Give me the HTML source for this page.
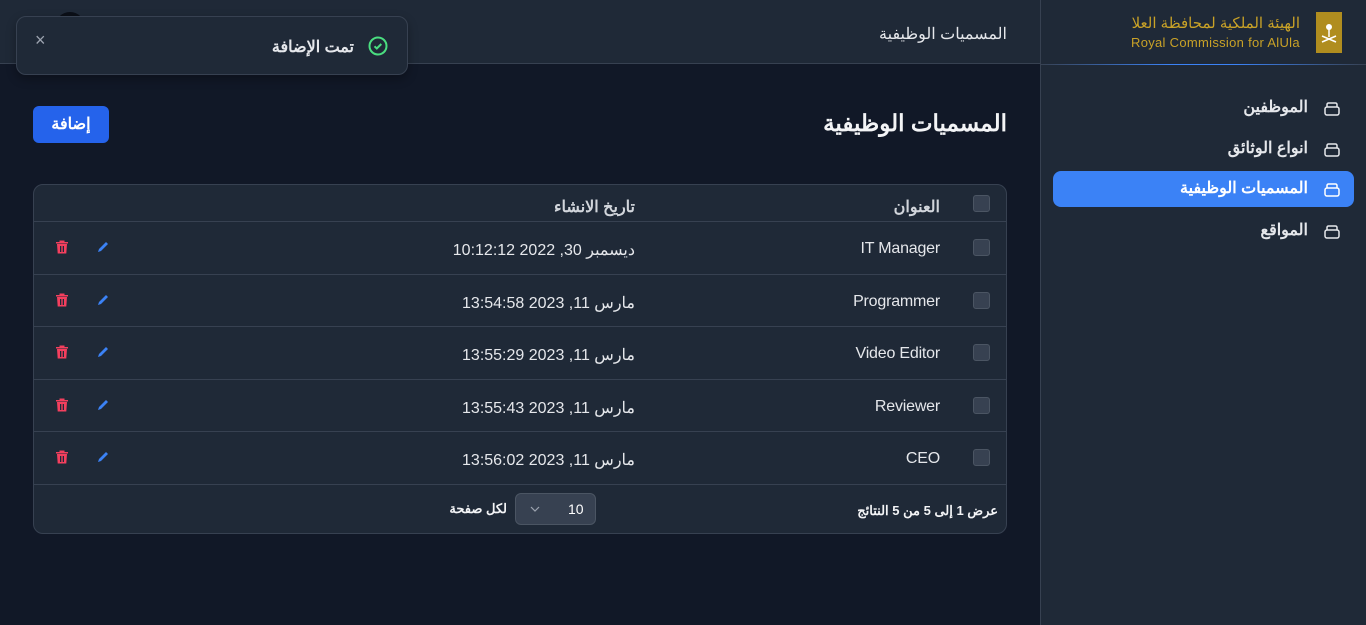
<!DOCTYPE html>
<html><head><meta charset="utf-8"><style>
*{box-sizing:border-box;margin:0;padding:0}
body{width:1366px;height:625px;background:#111827;font-family:"Liberation Sans","Noto Sans CJK SC",sans-serif;color:#e5e7eb;position:relative;overflow:hidden}
.abs{position:absolute}
.hdr{left:0;top:0;width:1040px;height:64px;background:#1f2937;border-bottom:1px solid #374151}
.side{left:1040px;top:0;width:326px;height:625px;background:#1f2937;border-left:1px solid #374151}
.rt{direction:rtl;text-align:right;white-space:nowrap}
.nav{left:1053px;width:301px;height:36px;border-radius:8px;font-size:16px;font-weight:bold;color:#e5e7eb;line-height:36px}
.nav span{position:absolute;right:46px}
.nav svg{position:absolute;right:14px;top:10px}
.tbl{left:33px;top:184px;width:974px;height:350px;background:#1f2937;border:1px solid #374151;border-radius:10px;overflow:hidden}
.row{position:absolute;left:0;width:972px;border-top:1px solid #374151}
.cb{position:absolute;left:939px;width:17px;height:17px;background:#374151;border:1px solid #4b5563;border-radius:3px}
.t1{position:absolute;right:66px;font-size:16px;letter-spacing:-0.2px}
.t2{position:absolute;right:371px;font-size:16px;letter-spacing:-0.3px}
</style></head><body>
<div class="abs hdr"></div>
<div class="abs" style="left:55px;top:12px;width:30px;height:30px;border-radius:50%;background:#0b0f17"></div>
<div class="abs rt" style="right:359px;top:24px;font-size:16px;color:#e5e7eb">المسميات الوظيفية</div>
<div class="abs side"></div>
<div class="abs" style="left:1040px;top:64px;width:326px;height:1px;background:linear-gradient(90deg,#374151,#3b82f6 40%,#3b82f6 60%,#374151)"></div>
<div class="abs" style="left:1316px;top:12px;width:26px;height:41px;background:#b08d1f"><svg width="26" height="41" viewBox="0 0 26 41"><circle cx="13" cy="15" r="3" fill="#fff"/><path d="M13 17v8M6 24l14 6M20 24l-14 6" stroke="#fff" stroke-width="1.5"/></svg></div>
<div class="abs rt" style="right:66px;top:14px;font-size:15px;color:#c9a227">الهيئة الملكية لمحافظة العلا</div>
<div class="abs" style="left:1131px;top:35px;font-size:13px;color:#c9a227;white-space:nowrap;letter-spacing:0.3px">Royal Commission for AlUla</div>
<div class="abs nav" style="top:90px"><span>الموظفين</span><svg width="16" height="16" viewBox="0 0 16 16" fill="none" stroke="#e5e7eb" stroke-width="1.5"><rect x="1" y="7" width="14" height="8" rx="2"/><path d="M3 7V4.5A1.5 1.5 0 0 1 4.5 3h7A1.5 1.5 0 0 1 13 4.5V7"/></svg></div>
<div class="abs nav" style="top:131px"><span>انواع الوثائق</span><svg width="16" height="16" viewBox="0 0 16 16" fill="none" stroke="#e5e7eb" stroke-width="1.5"><rect x="1" y="7" width="14" height="8" rx="2"/><path d="M3 7V4.5A1.5 1.5 0 0 1 4.5 3h7A1.5 1.5 0 0 1 13 4.5V7"/></svg></div>
<div class="abs nav" style="top:171px;background:#3b82f6;color:#fff"><span>المسميات الوظيفية</span><svg width="16" height="16" viewBox="0 0 16 16" fill="none" stroke="#fff" stroke-width="1.5"><rect x="1" y="7" width="14" height="8" rx="2"/><path d="M3 7V4.5A1.5 1.5 0 0 1 4.5 3h7A1.5 1.5 0 0 1 13 4.5V7"/></svg></div>
<div class="abs nav" style="top:213px"><span>المواقع</span><svg width="16" height="16" viewBox="0 0 16 16" fill="none" stroke="#e5e7eb" stroke-width="1.5"><rect x="1" y="7" width="14" height="8" rx="2"/><path d="M3 7V4.5A1.5 1.5 0 0 1 4.5 3h7A1.5 1.5 0 0 1 13 4.5V7"/></svg></div>

<div class="abs" style="left:16px;top:16px;width:392px;height:59px;background:#1f2937;border:1px solid #374151;border-radius:10px;box-shadow:0 4px 10px rgba(0,0,0,.3)"></div>
<svg class="abs" style="left:368px;top:36px" width="20" height="20" viewBox="0 0 20 20" fill="none" stroke="#4ade80" stroke-width="2"><circle cx="10" cy="10" r="8.5"/><path d="M6.5 10.3l2.3 2.2 4.5-4.5"/></svg>
<div class="abs rt" style="right:1012px;top:37px;font-size:16px;font-weight:bold;color:#e5e7eb">تمت الإضافة</div>
<div class="abs" style="left:35px;top:30px;font-size:18px;color:#9ca3af">×</div>

<div class="abs rt" style="right:359px;top:110px;font-size:23px;font-weight:bold;color:#f3f4f6">المسميات الوظيفية</div>
<div class="abs" style="left:33px;top:106px;width:76px;height:37px;background:#2563eb;border-radius:6px;color:#fff;font-size:16px;font-weight:bold;text-align:center;line-height:37px">إضافة</div>

<div class="abs tbl">
<div class="cb" style="top:10px"></div>
<div class="abs rt" style="right:66px;top:12px;font-size:16px;font-weight:bold;color:#d1d5db">العنوان</div>
<div class="abs rt" style="right:371px;top:12px;font-size:16px;font-weight:bold;color:#d1d5db">تاريخ الانشاء</div>

<div class="row" style="top:36px;height:53px"><div class="cb" style="top:17px"></div><div class="t1" style="top:18px">IT Manager</div><div class="t2 rt" style="top:18px">ديسمبر 30, 2022 10:12:12</div></div>
<div class="row" style="top:89px;height:52px"><div class="cb" style="top:17px"></div><div class="t1" style="top:18px">Programmer</div><div class="t2 rt" style="top:18px">مارس 11, 2023 13:54:58</div></div>
<div class="row" style="top:141px;height:53px"><div class="cb" style="top:17px"></div><div class="t1" style="top:18px">Video Editor</div><div class="t2 rt" style="top:18px">مارس 11, 2023 13:55:29</div></div>
<div class="row" style="top:194px;height:52px"><div class="cb" style="top:17px"></div><div class="t1" style="top:18px">Reviewer</div><div class="t2 rt" style="top:18px">مارس 11, 2023 13:55:43</div></div>
<div class="row" style="top:246px;height:53px"><div class="cb" style="top:17px"></div><div class="t1" style="top:18px">CEO</div><div class="t2 rt" style="top:18px">مارس 11, 2023 13:56:02</div></div>
<div class="row" style="top:299px;height:50px"></div>

<div class="abs rt" style="right:8px;top:318px;font-size:13px;font-weight:bold;color:#f3f4f6">عرض 1 إلى 5 من 5 النتائج</div>
<div class="abs" style="left:481px;top:308px;width:81px;height:32px;background:#374151;border:1px solid #4b5563;border-radius:6px"><span style="position:absolute;left:52px;top:7px;font-size:14px;color:#fff">10</span><svg style="position:absolute;left:14px;top:12px" width="10" height="6" viewBox="0 0 10 6" fill="none" stroke="#9ca3af" stroke-width="1.2"><path d="M1 1l4 4 4-4"/></svg></div>
<div class="abs rt" style="right:499px;top:316px;font-size:13px;font-weight:bold;color:#f3f4f6">لكل صفحة</div>
</div>

<div class="abs" style="left:0;top:0">
<svg class="abs" style="left:55px;top:240px" width="14" height="14" viewBox="0 0 14 14" fill="#f43f5e"><path d="M4.5 0.5h5v1.5H13v1.5H1V2h3.5z"/><path d="M2 4h10l-.7 9.5H2.7z M5 6v6h1.3V6z M7.7 6v6H9V6z" fill-rule="evenodd"/></svg>
<svg class="abs" style="left:96px;top:240px" width="14" height="14" viewBox="0 0 14 14"><path d="M2 12l1-3 7-7 2 2-7 7z" fill="#3b82f6"/></svg>
<svg class="abs" style="left:55px;top:293px" width="14" height="14" viewBox="0 0 14 14" fill="#f43f5e"><path d="M4.5 0.5h5v1.5H13v1.5H1V2h3.5z"/><path d="M2 4h10l-.7 9.5H2.7z M5 6v6h1.3V6z M7.7 6v6H9V6z" fill-rule="evenodd"/></svg>
<svg class="abs" style="left:96px;top:293px" width="14" height="14" viewBox="0 0 14 14"><path d="M2 12l1-3 7-7 2 2-7 7z" fill="#3b82f6"/></svg>
<svg class="abs" style="left:55px;top:345px" width="14" height="14" viewBox="0 0 14 14" fill="#f43f5e"><path d="M4.5 0.5h5v1.5H13v1.5H1V2h3.5z"/><path d="M2 4h10l-.7 9.5H2.7z M5 6v6h1.3V6z M7.7 6v6H9V6z" fill-rule="evenodd"/></svg>
<svg class="abs" style="left:96px;top:345px" width="14" height="14" viewBox="0 0 14 14"><path d="M2 12l1-3 7-7 2 2-7 7z" fill="#3b82f6"/></svg>
<svg class="abs" style="left:55px;top:398px" width="14" height="14" viewBox="0 0 14 14" fill="#f43f5e"><path d="M4.5 0.5h5v1.5H13v1.5H1V2h3.5z"/><path d="M2 4h10l-.7 9.5H2.7z M5 6v6h1.3V6z M7.7 6v6H9V6z" fill-rule="evenodd"/></svg>
<svg class="abs" style="left:96px;top:398px" width="14" height="14" viewBox="0 0 14 14"><path d="M2 12l1-3 7-7 2 2-7 7z" fill="#3b82f6"/></svg>
<svg class="abs" style="left:55px;top:450px" width="14" height="14" viewBox="0 0 14 14" fill="#f43f5e"><path d="M4.5 0.5h5v1.5H13v1.5H1V2h3.5z"/><path d="M2 4h10l-.7 9.5H2.7z M5 6v6h1.3V6z M7.7 6v6H9V6z" fill-rule="evenodd"/></svg>
<svg class="abs" style="left:96px;top:450px" width="14" height="14" viewBox="0 0 14 14"><path d="M2 12l1-3 7-7 2 2-7 7z" fill="#3b82f6"/></svg>
</div>
</body></html>
